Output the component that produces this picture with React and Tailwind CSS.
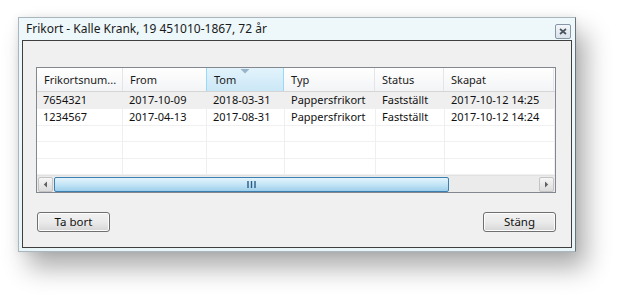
import React from 'react';

const COLUMNS = [
  { key: 'nr', label: 'Frikortsnum...', width: 86 },
  { key: 'from', label: 'From', width: 84 },
  { key: 'tom', label: 'Tom', width: 78, sorted: true },
  { key: 'typ', label: 'Typ', width: 91 },
  { key: 'status', label: 'Status', width: 69 },
  { key: 'skapat', label: 'Skapat', width: 110 },
];

const ROWS = [
  { nr: '7654321', from: '2017-10-09', tom: '2018-03-31', typ: 'Pappersfrikort', status: 'Fastställt', skapat: '2017-10-12 14:25' },
  { nr: '1234567', from: '2017-04-13', tom: '2017-08-31', typ: 'Pappersfrikort', status: 'Fastställt', skapat: '2017-10-12 14:24' },
  null,
  null,
  null,
];

function WinButton({ children, className = '' }) {
  return (
    <button className={`w-[73px] h-[20px] rounded-[3px] border border-[#707070] bg-gradient-to-b from-[#f2f2f2] via-[#ebebeb] to-[#d6d6d6] text-[11.5px] text-[#111] leading-none shadow-[inset_0_0_0_1px_#fcfcfc] ${className}`}>
      {children}
    </button>
  );
}

function ScrollArrow({ dir }) {
  return (
    <div className="w-[15px] h-[15px] my-[1px] mx-[1px] rounded-[2px] border border-[#c4c4c4] bg-gradient-to-b from-[#f6f6f6] to-[#dcdcdc] flex items-center justify-center">
      <svg width="5" height="7" viewBox="0 0 5 7">
        {dir === 'left' ? <path d="M4 0.5 L0.8 3.5 L4 6.5 Z" fill="#606060" /> : <path d="M1 0.5 L4.2 3.5 L1 6.5 Z" fill="#606060" />}
      </svg>
    </div>
  );
}

export default function App() {
  return (
    <div className="w-[626px] h-[300px] bg-white pl-[18px] pt-[17px]" style={{ fontFamily: '"Noto Sans", "Open Sans", sans-serif' }}>
      <div className="w-[558px] h-[235px] flex flex-col border border-[#a9b6bd] border-r-[#6b7277] bg-gradient-to-b from-[#eef8fa] to-[#e8f6f9] shadow-[10px_16px_24px_rgba(0,0,0,0.32),0_0_8px_rgba(0,0,0,0.08)] px-[3px] pb-[3px]">
        <div className="h-[22px] flex items-center justify-between pl-[4px] pr-[1px]">
          <span className="text-[12px] text-[#1a1a1a] leading-none">Frikort - Kalle Krank, 19 451010-1867, 72 år</span>
          <div className="w-[16px] h-[15px] mt-[5px] rounded-[2px] border border-[#8796a6] bg-gradient-to-b from-[#f4f7fa] to-[#dbe2ea] flex items-center justify-center">
            <svg width="8" height="7" viewBox="0 0 8 7">
              <path d="M1 1 L7 6 M7 1 L1 6" stroke="#4a5560" strokeWidth="1.7" />
            </svg>
          </div>
        </div>
        <div className="flex-1 border border-[#3f3f3f] bg-[#f0f0f0] flex flex-col px-[13px] pt-[26px]">
          <div className="w-[520px] h-[126px] border border-[#828790] bg-white flex flex-col">
            <div className="h-[25px] flex bg-gradient-to-b from-white to-[#f3f4f6] border-b border-[#d5d5d5]">
              {COLUMNS.map((c) => (
                <div
                  key={c.key}
                  style={{ width: c.width }}
                  className={`relative h-full flex items-center pl-[7px] text-[11px] text-[#1a1a1a] border-r whitespace-nowrap ${
                    c.sorted ? 'bg-gradient-to-b from-[#e3f4fc] to-[#cbe7f6] border-l border-[#96d9f9] border-r-[#96d9f9] -ml-[1px]' : 'border-r-[#e3e5e8]'
                  }`}
                >
                  {c.sorted && (
                    <svg className="absolute top-[1px] left-1/2 -translate-x-1/2" width="9" height="5" viewBox="0 0 9 5">
                      <path d="M0 0 L9 0 L4.5 4.5 Z" fill="#97b4c9" />
                    </svg>
                  )}
                  <span className="pt-[2px]">{c.label}</span>
                </div>
              ))}
            </div>
            {ROWS.map((r, i) => (
              <div key={i} className={`h-[17px] flex border-b border-[#f0f0f0] ${i === 0 ? 'bg-[#efefef]' : ''}`}>
                {COLUMNS.map((c) => (
                  <div key={c.key} style={{ width: c.width }} className="h-full flex items-center pl-[6px] text-[11px] text-[#111] border-r border-[#efefef] whitespace-nowrap overflow-hidden">
                    {r ? r[c.key] : ''}
                  </div>
                ))}
              </div>
            ))}
            <div className="h-[17px] mt-auto flex items-center bg-[#ebebeb] border-t border-[#e2e2e2]">
              <ScrollArrow dir="left" />
              <div className="flex-1 h-full flex items-center pr-[89px]">
                <div className="w-full h-[15px] rounded-[2px] border border-[#3c7fb1] bg-gradient-to-b from-[#e3f4fc] via-[#c4e5f6] to-[#9dcfeb] flex items-center justify-center">
                  <svg width="9" height="7" viewBox="0 0 9 7">
                    <path d="M1 0 V7 M4.5 0 V7 M8 0 V7" stroke="#2a5d86" strokeWidth="1.4" />
                  </svg>
                </div>
              </div>
              <ScrollArrow dir="right" />
            </div>
          </div>
          <div className="w-[520px] flex items-start justify-between mt-[19px]">
            <WinButton className="ml-[1px]">Ta bort</WinButton>
            <WinButton>Stäng</WinButton>
          </div>
        </div>
      </div>
    </div>
  );
}
